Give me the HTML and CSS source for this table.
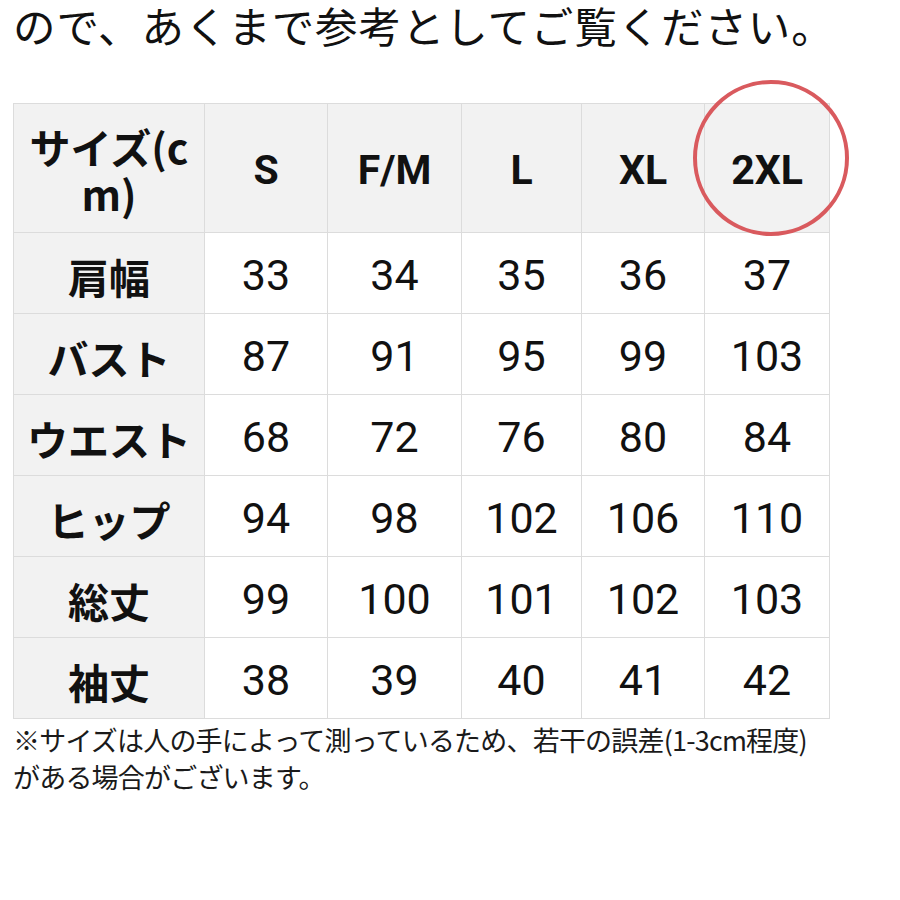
FILE: index.html
```html
<!DOCTYPE html>
<html lang="ja">
<head>
<meta charset="utf-8">
<link rel="stylesheet" href="styles.css">
</head>
<body>
<div class="page">
  <p class="lead">ので、あくまで参考としてご覧ください。</p>
  <div class="table-wrap">
    <table class="size-table">
      <colgroup>
        <col class="c-label"><col class="c-s"><col class="c-m"><col class="c-l"><col class="c-xl"><col class="c-2xl">
      </colgroup>
      <thead>
        <tr>
          <th class="corner">サイズ(cm)</th>
          <th>S</th><th>F/M</th><th>L</th><th>XL</th><th>2XL</th>
        </tr>
      </thead>
      <tbody>
        <tr><th>肩幅</th><td>33</td><td>34</td><td>35</td><td>36</td><td>37</td></tr>
        <tr><th>バスト</th><td>87</td><td>91</td><td>95</td><td>99</td><td>103</td></tr>
        <tr><th>ウエスト</th><td>68</td><td>72</td><td>76</td><td>80</td><td>84</td></tr>
        <tr><th>ヒップ</th><td>94</td><td>98</td><td>102</td><td>106</td><td>110</td></tr>
        <tr><th>総丈</th><td>99</td><td>100</td><td>101</td><td>102</td><td>103</td></tr>
        <tr><th>袖丈</th><td>38</td><td>39</td><td>40</td><td>41</td><td>42</td></tr>
      </tbody>
    </table>
    <span class="highlight-ring" aria-hidden="true"></span>
  </div>
  <p class="note">※サイズは人の手によって測っているため、若干の誤差(1-3cm程度)<br>がある場合がございます。</p>
</div>
</body>
</html>
```

FILE: styles.css
```css
html, body {
  margin: 0;
  padding: 0;
  background: #ffffff;
}

body {
  font-family: Roboto, "Noto Sans CJK JP", "Noto Sans", sans-serif;
  color: #111111;
}

.page {
  padding: 2px 0 0 13px;
}

.lead {
  margin: 0;
  font-family: "Noto Sans CJK JP", sans-serif;
  font-size: 42.5px;
  line-height: 46px;
  font-weight: 400;
  letter-spacing: 0.9px;
  white-space: nowrap;
}

.table-wrap {
  position: relative;
  margin-top: 55px;
  width: 816px;
}

.size-table {
  border-collapse: collapse;
  table-layout: fixed;
  width: 816px;
}

.c-label { width: 191px; }
.c-s { width: 123px; }
.c-m { width: 134px; }
.c-l { width: 120px; }
.c-xl { width: 123px; }
.c-2xl { width: 125px; }

.size-table th,
.size-table td {
  border: 1.5px solid #dcdcdc;
  text-align: center;
  vertical-align: middle;
  padding: 0 6px;
}

.size-table thead th {
  height: 124px;
  background: #f2f2f2;
  font-family: Roboto, "Noto Sans CJK JP", sans-serif;
  font-weight: 700;
  font-size: 41px;
  line-height: 47px;
  padding-top: 4px;
}

.size-table thead th.corner {
  font-family: "Noto Sans CJK JP", Roboto, sans-serif;
  word-break: break-all;
  padding: 4px 8px 0;
}

.size-table tbody th {
  height: 74px;
  background: #f2f2f2;
  font-family: "Noto Sans CJK JP", sans-serif;
  font-weight: 700;
  font-size: 41px;
  line-height: 48px;
  white-space: nowrap;
  padding-top: 6px;
}

.size-table tbody td {
  height: 76px;
  background: #ffffff;
  font-family: Roboto, sans-serif;
  font-weight: 400;
  font-size: 43px;
  line-height: 48px;
  padding-top: 4px;
}

.highlight-ring {
  position: absolute;
  left: 680px;
  top: -23px;
  width: 148px;
  height: 148px;
  border: 4px solid #d95a5e;
  border-radius: 50%;
  pointer-events: none;
}

.note {
  margin: 2px 0 0;
  font-family: "Noto Sans CJK JP", sans-serif;
  font-size: 27px;
  line-height: 37px;
  letter-spacing: -0.8px;
  color: #1a1a1a;
  white-space: nowrap;
}
```
